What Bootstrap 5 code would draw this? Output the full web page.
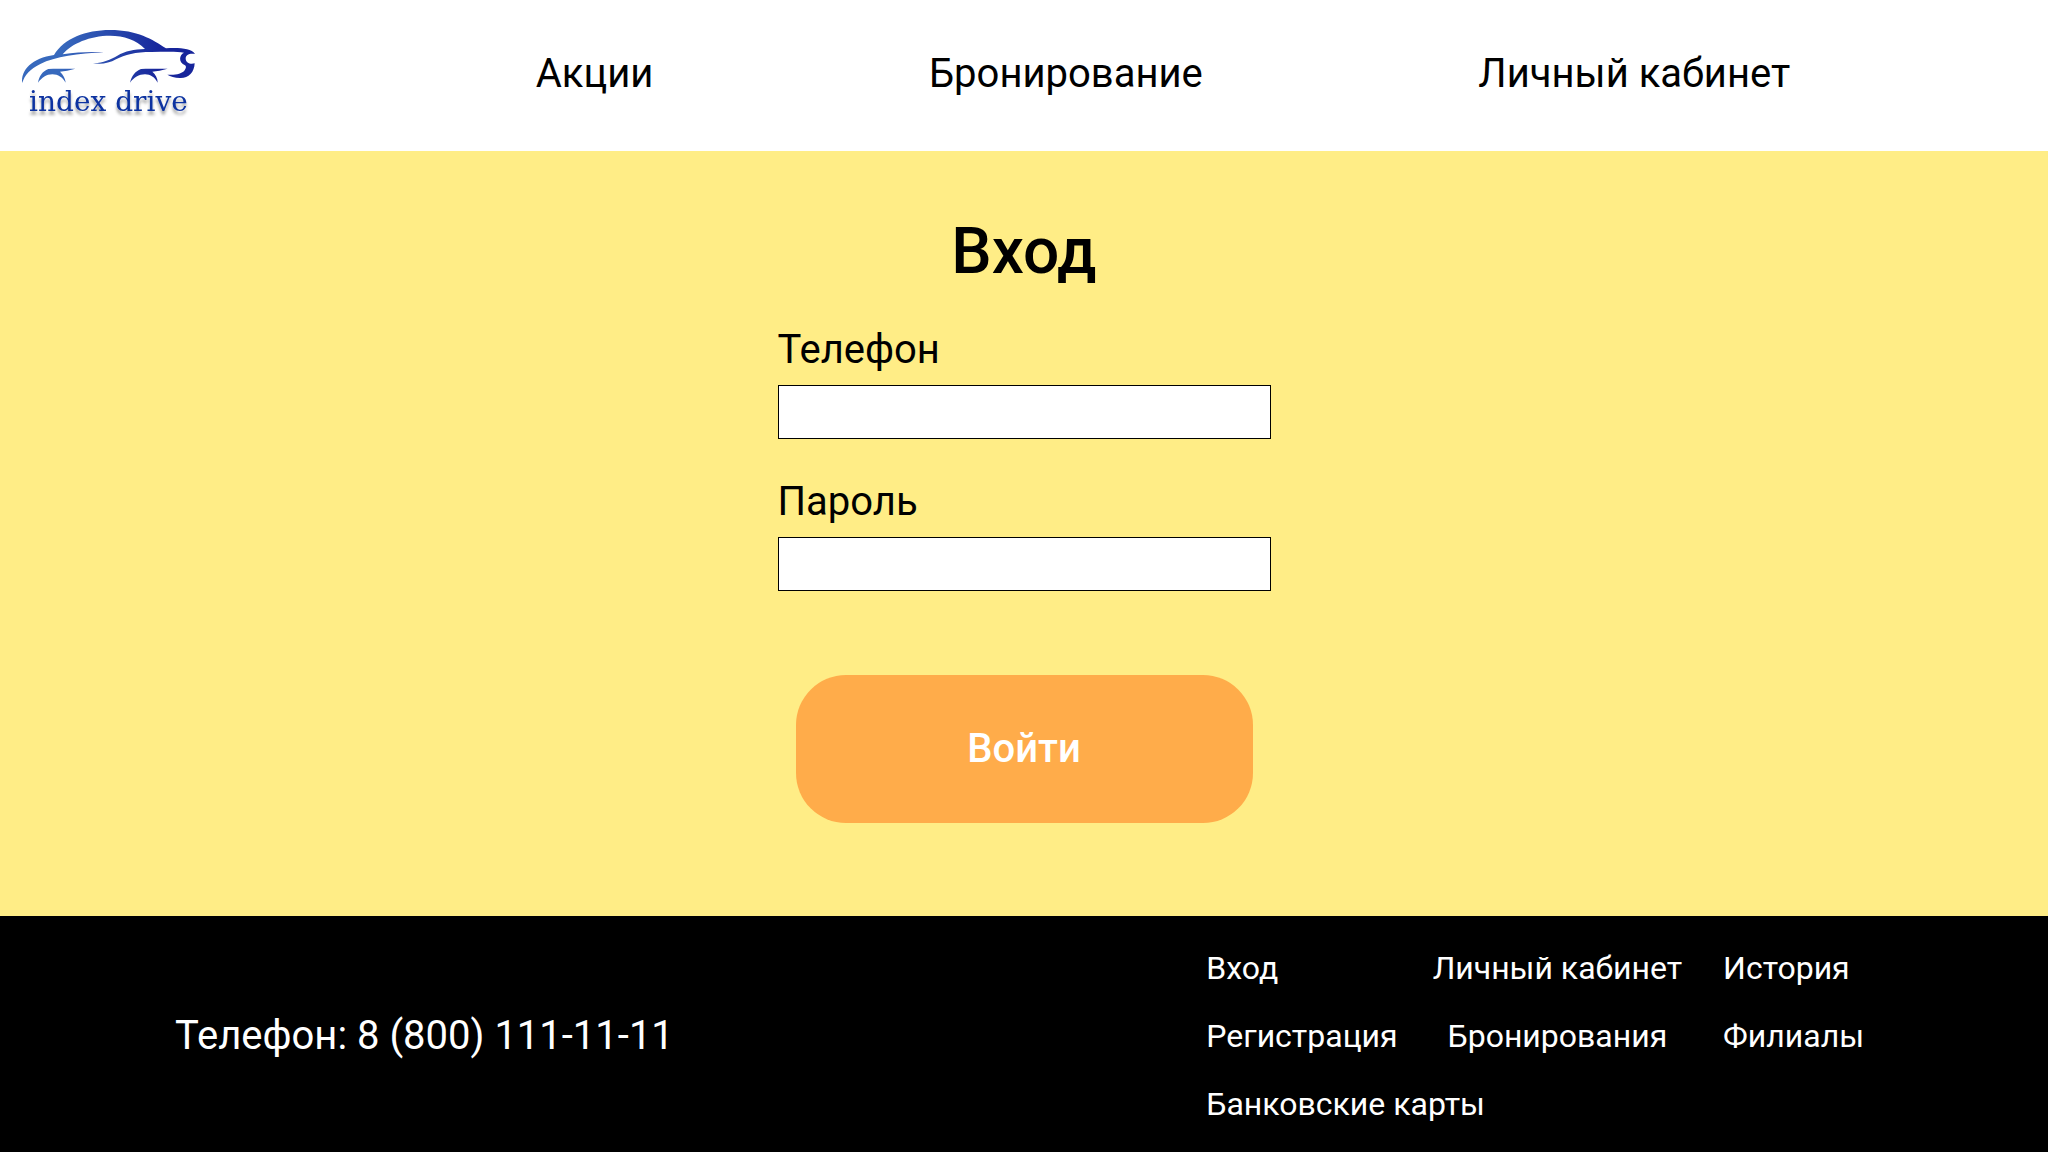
<!DOCTYPE html>
<html lang="ru">
<head>
<meta charset="utf-8">
<meta name="viewport" content="width=device-width, initial-scale=1">
<title>Index Drive — Вход</title>
<link href="https://cdn.jsdelivr.net/npm/bootstrap@5.3.0/dist/css/bootstrap.min.css" rel="stylesheet">
<style>
  body { font-family: Roboto, "Noto Sans", sans-serif; font-size: 40px; line-height: 60px; color: #000; background: #ffed86; }
  .site-header { padding: 19px 120px 22px 10px; background: #fff; }
  .brand-logo { width: 200px; height: 110px; display: block; }
  .brand-name { font-family: "DejaVu Serif", serif; font-size: 84px; fill: #0a32a0; }
  .site-nav { margin-left: 188px; }
  .site-header a, .site-footer a { color: inherit; text-decoration: none; }
  .login-area { padding: 63px 16px 93px; background: #ffed86; }
  .login-title { font-size: 64px; line-height: 76px; font-weight: 500; margin-bottom: 30px; }
  .login-form { width: 100%; max-width: 493px; }
  .field-group { margin-bottom: 32px; }
  .field-group label { margin-bottom: 5px; display: block; }
  .field-group .form-control { height: 54px; border: 1px solid #000; border-radius: 0; background: #fff; font-size: 32px; padding: 0 12px; }
  .field-group + .field-group { padding-top: 1px; }
  .login-button { width: 457px; max-width: 100%; height: 148px; margin-top: 52px; border: 0; border-radius: 50px; font-size: 40px; font-weight: 500; }
  .login-button, .login-button:hover { background: #ffac4a; color: #fff; }
  .site-footer { background: #000; color: #fff; padding: 28px 184px 24px 175px; }
  .footer-links { display: grid; grid-template-columns: repeat(3, auto); column-gap: 35px; row-gap: 20px; font-size: 32px; line-height: 48px; }
  .footer-wide { grid-column: span 2; }
  .footer-last { padding-left: 6px; }
</style>
</head>
<body class="d-flex flex-column min-vh-100">
<header class="site-header d-flex align-items-center">
  <a href="#" aria-label="index drive">
    <svg class="brand-logo" viewBox="0 -3 600 330" aria-hidden="true">
      <defs>
        <linearGradient id="carPaint" gradientUnits="userSpaceOnUse" x1="150" y1="120" x2="450" y2="150">
          <stop offset="0" stop-color="#3769bd"/>
          <stop offset="1" stop-color="#17259b"/>
        </linearGradient>
        <filter id="nameShadow" x="-10%" y="-20%" width="120%" height="160%">
          <feDropShadow dx="0" dy="11" stdDeviation="4" flood-color="#000" flood-opacity=".38"/>
        </filter>
      </defs>
      <g fill="url(#carPaint)">
        <path d="M37 189C31 151 67 114 132 105C162 55 227 30 300 30C382 30 427 58 468 85C505 83 544 84 555 102C538 99 527 105 527 116C528 129 540 133 554 130C553 158 535 175 510 174C494 173 481 169 472 164C493 166 515 163 524 151C529 144 529 138 525 136C505 127 507 105 522 98C500 94 460 96 425 96C375 96 345 104 318 118C297 131 268 134 249 129C278 130 300 119 322 107C346 93 372 88 405 87C378 59 342 47 300 47C240 47 184 71 158 103C200 97 240 95 282 97C205 101 135 110 91 132C60 147 43 166 37 189Z"/>
        <path d="M84 188C88 168 97 154 115 147C140 145 170 147 196 146C180 151 163 153 150 155C160 164 166 176 167 188C157 172 145 163 127 163C109 163 96 173 84 188Z"/>
        <path d="M360 188C365 168 375 154 393 147C418 145 448 147 473 146C457 151 440 153 427 155C437 163 443 175 443 188C434 172 422 163 405 163C387 163 371 173 360 188Z"/>
      </g>
      <text class="brand-name" x="57" y="272" filter="url(#nameShadow)">index drive</text>
    </svg>
  </a>
  <nav class="site-nav d-flex flex-grow-1 justify-content-around">
    <a href="#">Акции</a>
    <a href="#">Бронирование</a>
    <a href="#">Личный кабинет</a>
  </nav>
</header>
<main class="login-area flex-grow-1 d-flex flex-column align-items-center">
  <h1 class="login-title">Вход</h1>
  <form class="login-form">
    <div class="field-group">
      <label for="phone">Телефон</label>
      <input class="form-control" type="tel" id="phone">
    </div>
    <div class="field-group">
      <label for="password">Пароль</label>
      <input class="form-control" type="password" id="password">
    </div>
    <div class="d-flex justify-content-center">
      <button class="btn login-button" type="submit">Войти</button>
    </div>
  </form>
</main>
<footer class="site-footer d-flex justify-content-between align-items-center">
  <div>Телефон: 8 (800) 111-11-11</div>
  <nav class="footer-links">
    <a href="#">Вход</a>
    <a href="#" class="text-center">Личный кабинет</a>
    <a href="#" class="footer-last">История</a>
    <a href="#">Регистрация</a>
    <a href="#" class="text-center">Бронирования</a>
    <a href="#" class="footer-last">Филиалы</a>
    <a href="#" class="footer-wide">Банковские карты</a>
  </nav>
</footer>
<script src="https://cdn.jsdelivr.net/npm/bootstrap@5.3.0/dist/js/bootstrap.bundle.min.js"></script>
</body>
</html>
